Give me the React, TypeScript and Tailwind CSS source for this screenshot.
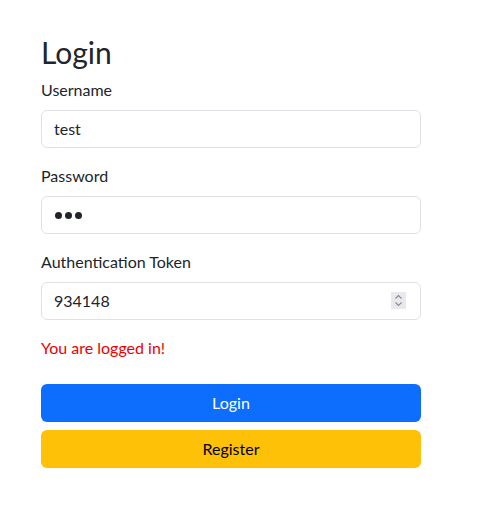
import React from "react";

const font = { fontFamily: '"Segoe UI", Lato, "Liberation Sans", sans-serif' };

function Field({ label, value, password, spinner }: { label: string; value: string; password?: boolean; spinner?: boolean }) {
  return (
    <div className="mb-4">
      <label className="block text-[16px] leading-6 mb-2 text-[#212529]">{label}</label>
      <div className="relative">
        <div className="h-[38px] w-full border border-[#dee2e6] rounded-[6px] bg-white px-3 flex items-center text-[16px] text-[#212529]">
          {password ? (
            <span className="flex gap-[3px] pl-[1px]">
              <span className="w-[7px] h-[7px] rounded-full bg-[#212529]" />
              <span className="w-[7px] h-[7px] rounded-full bg-[#212529]" />
              <span className="w-[7px] h-[7px] rounded-full bg-[#212529]" />
            </span>
          ) : (
            <span>{value}</span>
          )}
        </div>
        {spinner && (
          <div className="absolute right-[15px] top-[10px] w-[15px] h-[17px] bg-[#e9e9ed] flex items-center justify-center">
            <svg width="9" height="13" viewBox="0 0 9 13" fill="none" stroke="#8a8a8f" strokeWidth="1.1">
              <path d="M1.5 4.5 L4.5 1.5 L7.5 4.5" />
              <path d="M1.5 8.5 L4.5 11.5 L7.5 8.5" />
            </svg>
          </div>
        )}
      </div>
    </div>
  );
}

export default function App() {
  return (
    <div className="min-h-[509px] bg-white" style={font}>
      <div className="ml-[41px] w-[380px] pt-[35px]">
        <h1 className="text-[30px] leading-[35px] font-normal mb-2 text-[#212529]">Login</h1>
        <Field label="Username" value="test" />
        <Field label="Password" value="" password />
        <Field label="Authentication Token" value="934148" spinner />
        <p className="text-[16px] leading-6 text-[#ee0000] mb-6">You are logged in!</p>
        <button className="w-full h-[38px] rounded-[6px] bg-[#0d6efd] text-white text-[16px] mb-2">Login</button>
        <button className="w-full h-[38px] rounded-[6px] bg-[#ffc107] text-black text-[16px]">Register</button>
      </div>
    </div>
  );
}
